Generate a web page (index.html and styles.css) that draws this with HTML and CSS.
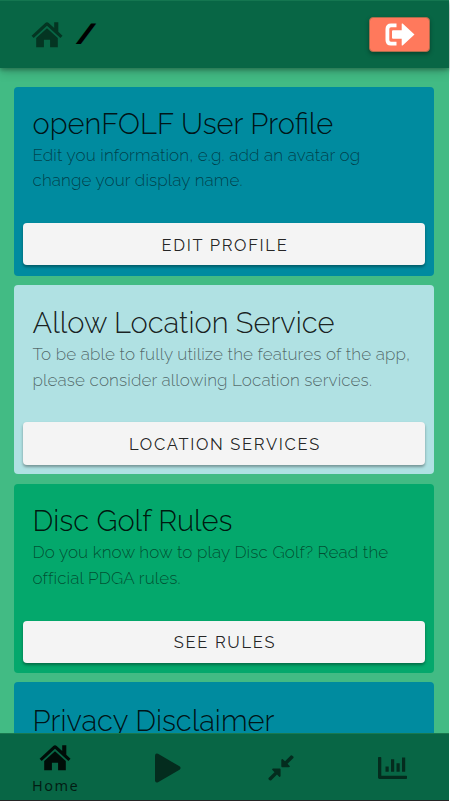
FILE: index.html
```html
<!DOCTYPE html>
<html lang="en">
<head>
<meta charset="utf-8">
<title>openFOLF</title>
<link rel="stylesheet" href="styles.css">
</head>
<body>
<div class="app">
  <header class="topbar">
    <svg class="home-icon" viewBox="0 0 32 27" aria-hidden="true"><path d="M.6 14.7 14.3 2.1Q16 .6 17.7 2.1l5.500 5V1.200h4.100v9.600l4.200 3.900-2.100 2.300L16 4.800 2.700 17Z"/><path d="M16 7.200 26.800 17v9.300h-7.700v-7.500h-6.200v7.500H5.200V17Z"/></svg>
    <span class="crumb">/</span>
    <button class="logout" aria-label="Log out"><svg viewBox="0 0 30 23"><path d="M11.500 2.400H6Q2.400 2.400 2.400 6v11q0 3.600 3.600 3.600h5.500" fill="none" stroke="#fff" stroke-width="3.800"/><path d="M8 7.300h8.700V.8q.2-.7.9-.2l11.900 10.900-11.900 10.900q-.7.5-.9-.2v-6.500H8q-1 0-1-1V8.300q0-1 1-1Z" fill="#fff" stroke="#ff795c" stroke-width="1" paint-order="stroke"/></svg></button>
  </header>
  <main class="content">
    <section class="card blue profile">
      <h2>openFOLF User Profile</h2>
      <p>Edit you information, e.g. add an avatar og<br>change your display name.</p>
      <button class="action">EDIT PROFILE</button>
    </section>
    <section class="card pale">
      <h2>Allow Location Service</h2>
      <p>To be able to fully utilize the features of the app,<br>please consider allowing Location services.</p>
      <button class="action">LOCATION SERVICES</button>
    </section>
    <section class="card green">
      <h2>Disc Golf Rules</h2>
      <p>Do you know how to play Disc Golf? Read the<br>official PDGA rules.</p>
      <button class="action">SEE RULES</button>
    </section>
    <section class="card blue privacy">
      <h2>Privacy Disclaimer</h2>
    </section>
  </main>
  <nav class="tabs">
    <a class="tab active"><svg class="home-icon" viewBox="0 0 32 27"><path d="M.6 14.7 14.3 2.1Q16 .6 17.7 2.1l5.500 5V1.200h4.100v9.600l4.200 3.900-2.100 2.300L16 4.800 2.700 17Z"/><path d="M16 7.200 26.800 17v9.300h-7.700v-7.500h-6.200v7.500H5.200V17Z"/></svg><span>Home</span></a>
    <a class="tab"><svg class="play" viewBox="0 0 26 30"><path d="M0 2.500Q.2-.2 3 .8l21.500 12.500q2.200 1.700 0 3.400L3 29.200Q.2 30.200 0 27.500Z"/></svg></a>
    <a class="tab"><svg class="compress" viewBox="0 0 26 26"><path d="M23 .3Q24 0 25.500 1.800 25.800 2.600 25.200 3.200L19.500 8.800 22 11.200Q21.500 12.300 20.500 12.300H14.300Q13.300 12.300 13.300 11.300V5Q13.500 4 14.500 4L17 6.200ZM3 25.500Q2 26 .5 24.200.2 23.400.8 22.800L6.500 17.200 4 14.600Q4.300 13.400 5.300 13.400h6.300q1 0 1 1V20.700q-.2 1.200-1.200 1.200L9 19.600Z"/></svg></a>
    <a class="tab"><svg class="chart" viewBox="0 0 30 22"><path d="M0 .8Q0 0 .8 0h1.700q.8 0 .8.8v17.900h24.900q.8 0 .8.800v1.700q0 .8-.8.800H1.500Q0 22 0 20.500ZM7.500 9.600h3.200v5.200H7.500ZM13 2.200h3.200v12.600H13ZM18.500 6.300h3.200v8.500h-3.200ZM24 .5h3.200v14.300H24Z"/></svg></a>
  </nav>
</div>
</body>
</html>
```
FILE: styles.css
```css
* { box-sizing: border-box; }
html, body { margin: 0; height: 801px; overflow: hidden; }
body { background: linear-gradient(90deg, transparent 449px, #fff 449px), #252525; font-family: Raleway, Lato, "Open Sans", sans-serif; font-weight: 300; }
.app { width: 449px; height: 801px; background: #42bb84; display: grid; grid-template-rows: 68px 665px 67px; border-bottom: 1px solid #252525; }
.topbar { background: #086645; display: flex; align-items: center; padding: 0 19px 0 31px; box-shadow: 0 2px 4px rgba(0,0,0,.28), 0 4px 10px rgba(0,0,0,.18); border-top: 1px solid #147650; z-index: 2; }
.home-icon { width: 32px; height: 27px; fill: #043522; display: block; }
.crumb { width: 22px; margin: -2px 0 0 12px; font-size: 29px; line-height: 32px; font-weight: 800; text-align: center; transform: skewX(-2deg); }
.logout { width: 61px; height: 35px; margin: -1px 0 0 auto; padding: 0 0 0 1px; border: 1px solid #ac6c4b; border-radius: 4px; background: #ff795c; display: flex; align-items: center; justify-content: center; box-shadow: 0 2px 4px rgba(0,0,0,.35); }
.topbar .home-icon { margin-left: -.5px; }
.logout svg { width: 30px; height: 23px; }
.content { padding: 19px 15px 0 14px; overflow: hidden; display: flex; flex-direction: column; gap: 9.400px; }
.card { flex: 0 0 189px; border-radius: 4px; padding: 19px 9px 9.500px; display: flex; flex-direction: column; }
.profile { padding-bottom: 11px; }
.pale { padding: 20px 9px 9px; }
.privacy { padding-top: 20.500px; }
.blue { background: #008b9f; }
.pale { background: #b0e1e3; }
.green { background: #04a86c; }
h2 { margin: 0 9.500px; font-size: 29.100px; line-height: 37px; font-weight: 300; color: rgba(0,0,0,.87); white-space: nowrap; }
p { margin: -1px 9.500px 0; font-size: 17px; line-height: 26px; letter-spacing: .12px; color: rgba(0,0,0,.55); white-space: nowrap; }
.profile p { margin-top: 0; line-height: 25px; }
.action { margin-top: auto; height: 42px; border: 0; padding: 0 0 0 2px; border-radius: 4px; background: #f4f4f4; color: rgba(0,0,0,.87); font: 400 16.500px/42px Raleway, Lato, sans-serif; letter-spacing: 1.680px; box-shadow: 0 2px 3px rgba(0,0,0,.35); }
.profile .action { line-height: 43px; padding-top: 1px; }
.pale .action { height: 43px; line-height: 43px; padding-top: 1px; }
.tabs { background: #086645; display: grid; grid-template-columns: repeat(4, 1fr); border-top: 1px solid #19794f; z-index: 2; }
.tab { display: flex; flex-direction: column; align-items: center; justify-content: center; fill: #042c1e; }
.tab span { font: 400 14.500px/18px "Noto Sans", sans-serif; letter-spacing: 1.500px; margin-top: 5px; padding-left: 1px; color: rgba(0,0,0,.72); }
.active { padding: 3px 2px 0 0; }
.active .home-icon { fill: #000d08; }
.play { width: 26px; height: 30px; margin: 2px 0 0; }
.compress { width: 26px; height: 26px; margin: 2px 0 0; }
.chart { width: 30px; height: 22px; margin: 2px 0 0; }
```
